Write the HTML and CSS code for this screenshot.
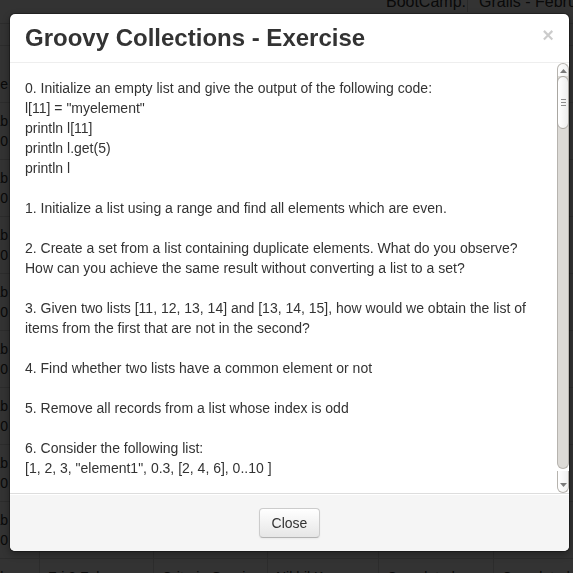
FILE: index.html
```html
<!DOCTYPE html>
<html lang="en">
<head>
<meta charset="utf-8">
<title>Groovy Collections - Exercise</title>
<link rel="stylesheet" href="styles.css">
</head>
<body>
<div class="page">
  <div class="info">
    <div class="info-label">BootCamp:</div>
    <div class="info-value">Grails - February 2013</div>
  </div>
  <table class="schedule">
    <colgroup>
      <col class="c1"><col class="c2"><col class="c3"><col class="c4"><col class="c5"><col class="c6">
    </colgroup>
    <thead>
      <tr><th class="first">Type</th><th>Session<br>Date</th><th>Topic<br>Name</th><th>Trainer<br>Name</th><th>Session<br>Status</th><th>Exercise<br>Status</th></tr>
    </thead>
    <tbody>
      <tr><td class="first">Groovy Lab<br>Batch 10</td><td>Mon 4 Feb<br>2013</td><td>Groovy Basics</td><td>Nikhil Kumar</td><td>Completed</td><td>Completed</td></tr>
      <tr><td class="first">Groovy Lab<br>Batch 10</td><td>Tue 5 Feb<br>2013</td><td>Groovy Closures</td><td>Nikhil Kumar</td><td>Completed</td><td>Completed</td></tr>
      <tr><td class="first">Groovy Lab<br>Batch 10</td><td>Wed 6 Feb<br>2013</td><td>Groovy Collections</td><td>Nikhil Kumar</td><td>Completed</td><td>Pending</td></tr>
      <tr><td class="first">Groovy Lab<br>Batch 10</td><td>Thu 7 Feb<br>2013</td><td>Groovy OOP</td><td>Nikhil Kumar</td><td>Completed</td><td>Pending</td></tr>
      <tr><td class="first">Grails Lab<br>Batch 10</td><td>Thu 7 Feb<br>2013</td><td>Grails Intro</td><td>Nikhil Kumar</td><td>Completed</td><td>Pending</td></tr>
      <tr><td class="first">Grails Lab<br>Batch 10</td><td>Fri 8 Feb<br>2013</td><td>GORM</td><td>Nikhil Kumar</td><td>Completed</td><td>Pending</td></tr>
      <tr><td class="first">Grails Lab<br>Batch 10</td><td>Fri 8 Feb<br>2013</td><td>Dynamic Finders</td><td>Nikhil Kumar</td><td>Completed</td><td>Pending</td></tr>
      <tr><td class="first">Grails Lab<br>Batch 10</td><td>Fri 8 Feb<br>2013</td><td>Criteria Queries</td><td>Nikhil Kumar</td><td>Completed</td><td>Completed</td></tr>
      <tr><td class="first">Grails Lab<br>Batch 10</td><td>Fri 8 Feb<br>2013</td><td>Criteria Queries</td><td>Nikhil Kumar</td><td>Completed</td><td>Completed</td></tr>
    </tbody>
  </table>
</div>

<div class="backdrop"></div>

<div class="modal">
  <div class="modal-header">
    <h3 class="modal-title">Groovy Collections - Exercise</h3>
    <button class="close" type="button">×</button>
  </div>
  <div class="modal-body">
    <div class="modal-scroll">
      <p>0. Initialize an empty list and give the output of the following code:<br>l[11] = "myelement"<br>println l[11]<br>println l.get(5)<br>println l</p>
      <p>1. Initialize a list using a range and find all elements which are even.</p>
      <p>2. Create a set from a list containing duplicate elements. What do you observe? How can you achieve the same result without converting a list to a set?</p>
      <p>3. Given two lists [11, 12, 13, 14] and [13, 14, 15], how would we obtain the list of items from the first that are not in the second?</p>
      <p>4. Find whether two lists have a common element or not</p>
      <p>5. Remove all records from a list whose index is odd</p>
      <p>6. Consider the following list:<br>[1, 2, 3, "element1", 0.3, [2, 4, 6], 0..10 ]</p>
      <p>Find the size of the list and flatten it into a single list of numbers.</p>
    </div>
    <div class="scrollbar" aria-hidden="true">
      <div class="sb-btn sb-up">
        <svg width="7" height="4" viewBox="0 0 7 4"><polygon points="0,4 3.5,0 7,4" fill="#7a7a7a"/></svg>
      </div>
      <div class="sb-track">
        <div class="sb-thumb"></div>
      </div>
      <div class="sb-btn sb-down">
        <svg width="7" height="4" viewBox="0 0 7 4"><polygon points="0,0 7,0 3.5,4" fill="#7a7a7a"/></svg>
      </div>
    </div>
  </div>
  <div class="modal-footer">
    <button class="btn" type="button">Close</button>
  </div>
</div>
</body>
</html>
```

FILE: styles.css
```css
html, body {
  margin: 0;
  padding: 0;
}

body {
  background: #ffffff;
  color: #333333;
  font-family: "Liberation Sans", Arial, sans-serif;
  font-size: 14px;
  line-height: 20px;
  overflow: hidden;
}

/* ---------- background page ---------- */
.info {
  display: flex;
  align-items: flex-start;
  margin-top: -10px;
  height: 33px;
  border-bottom: 1px solid #dddddd;
  font-size: 16px;
  line-height: 24px;
}

.info-label {
  width: 466px;
  flex: none;
  text-align: right;
  padding-right: 1px;
}

.info-value {
  height: 22px;
  padding-left: 11px;
  border-left: 1px solid #cccccc;
  white-space: nowrap;
}

.schedule {
  margin-top: 21px;
  margin-left: -140px;
  border-collapse: collapse;
  table-layout: fixed;
  width: 747px;
}

.schedule .c1 { width: 179px; }
.schedule .c2 { width: 114px; }
.schedule .c3 { width: 114px; }
.schedule .c4 { width: 111px; }
.schedule .c5 { width: 115px; }
.schedule .c6 { width: 114px; }

.schedule th,
.schedule td {
  border: 1px solid #dddddd;
  padding: 8px;
  text-align: left;
  vertical-align: top;
  white-space: nowrap;
  overflow: hidden;
}

.schedule th {
  vertical-align: bottom;
  font-weight: bold;
}

.schedule .first {
  text-align: right;
  padding-right: 31px;
  font-weight: normal;
}

.backdrop {
  position: fixed;
  inset: 0;
  background: rgba(0, 0, 0, 0.8);
}

/* ---------- modal ---------- */
.modal {
  position: fixed;
  top: 13px;
  left: 9px;
  width: 561px;
  box-sizing: border-box;
  background: #ffffff;
  background-clip: padding-box;
  border: 1px solid rgba(0, 0, 0, 0.3);
  border-radius: 6px;
  box-shadow: 0 3px 7px rgba(0, 0, 0, 0.3);
  overflow: hidden;
}

.modal-header {
  display: flex;
  justify-content: space-between;
  align-items: flex-start;
  padding: 9px 15px;
  border-bottom: 1px solid #eeeeee;
}

.modal-title {
  margin: 0;
  font-size: 24px;
  line-height: 30px;
  font-weight: bold;
  color: #333333;
}

.close {
  margin-top: 2px;
  padding: 0;
  border: 0;
  background: transparent;
  font-family: "Liberation Sans", Arial, sans-serif;
  font-size: 20px;
  font-weight: bold;
  line-height: 20px;
  color: #000000;
  opacity: 0.2;
  cursor: pointer;
}

.modal-body {
  display: flex;
  height: 430px;
}

.modal-scroll {
  flex: 1;
  min-width: 0;
  padding: 15px;
  overflow: hidden;
}

.modal-scroll p {
  margin: 0 0 20px;
}

/* fake GTK-style scrollbar */
.scrollbar {
  flex: none;
  width: 12px;
  display: flex;
  flex-direction: column;
}

.sb-btn {
  flex: none;
  box-sizing: border-box;
  display: flex;
  justify-content: center;
  background: linear-gradient(to right, #ffffff, #f0f0f0);
  border: 1px solid #b6b3ae;
}

.sb-btn svg {
  display: block;
}

.sb-up {
  height: 13px;
  align-items: center;
  padding-top: 1px;
  border-bottom: 0;
  border-radius: 6px 6px 0 0;
}

.sb-down {
  height: 22px;
  align-items: center;
  padding-top: 6px;
  border-top: 0;
  border-radius: 0 0 6px 6px;
}

.sb-track {
  flex: 1;
  box-sizing: border-box;
  background: #dcdad6;
  border: 1px solid #b6b3ae;
  border-top: 0;
  border-radius: 0 0 6px 6px;
  margin-bottom: 2px;
}

.sb-thumb {
  height: 53px;
  margin: 0 -1px;
  box-sizing: border-box;
  border: 1px solid #a9a6a1;
  border-radius: 6px;
  background:
    linear-gradient(#8c8c8c, #8c8c8c) center calc(50% - 3px) / 5px 1px no-repeat,
    linear-gradient(#8c8c8c, #8c8c8c) center center / 5px 1px no-repeat,
    linear-gradient(#8c8c8c, #8c8c8c) center calc(50% + 3px) / 5px 1px no-repeat,
    linear-gradient(to right, #ffffff, #ededed);
}

.modal-footer {
  padding: 14px 15px 13px;
  text-align: center;
  background: #f5f5f5;
  border-top: 1px solid #dddddd;
  box-shadow: inset 0 1px 0 #ffffff;
}

.btn {
  display: inline-block;
  padding: 4px 12px;
  font-family: "Liberation Sans", Arial, sans-serif;
  font-size: 14px;
  line-height: 20px;
  color: #333333;
  background: linear-gradient(#ffffff, #e6e6e6);
  border: 1px solid #cccccc;
  border-bottom-color: #b3b3b3;
  border-radius: 4px;
  box-shadow: inset 0 1px 0 rgba(255, 255, 255, 0.2), 0 1px 2px rgba(0, 0, 0, 0.05);
  cursor: pointer;
}
```
